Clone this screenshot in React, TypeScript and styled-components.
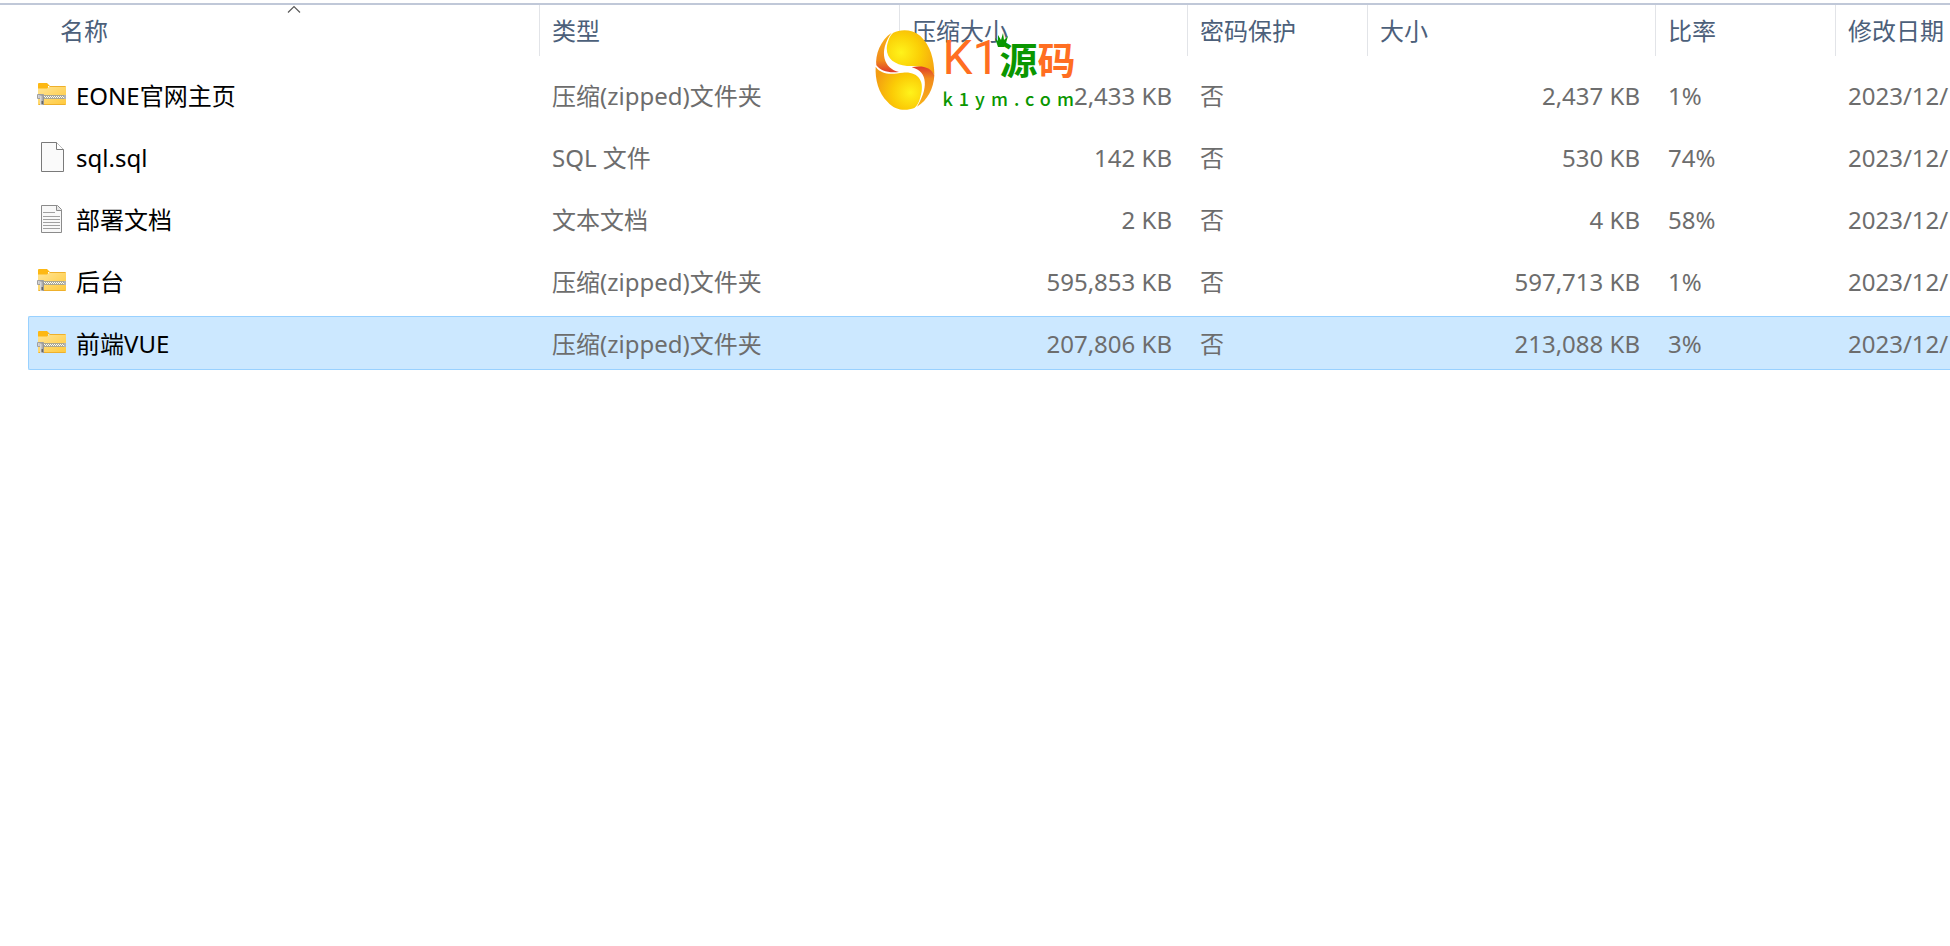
import React from "react";
import styled, { createGlobalStyle } from "styled-components";

const GlobalStyle = createGlobalStyle`
  * { box-sizing: border-box; }
  html, body { margin: 0; background: #fff; }
  body {
    font-family: "Noto Sans", "Noto Sans CJK SC", sans-serif;
    font-size: 24px;
    line-height: 32px;
    overflow-x: hidden;
  }
`;

const COLUMNS = "512px 360px 288px 180px 288px 180px minmax(0, 1fr)";

const Pane = styled.main`
  position: relative;
  min-height: 100vh;
  padding-top: 3px;
  overflow: hidden;
`;

const Table = styled.table`
  display: block;
  border-top: 2px solid #c0c8d8;
  padding-left: 28px;
`;

const Head = styled.thead`
  display: block;
  margin-bottom: 12px;
`;

const Body = styled.tbody`
  display: flex;
  flex-direction: column;
  gap: 8px;
`;

const HeadRow = styled.tr`
  display: grid;
  grid-template-columns: ${COLUMNS};
`;

const HeadCell = styled.th<{ $inset?: boolean }>`
  position: relative;
  display: flex;
  height: 51px;
  margin-left: ${(p) => (p.$inset ? "20px" : "0")};
  padding: 0;
  border-right: 1px solid #e2e4e8;
  &:last-child { border-right: 0; }
`;

const SortButton = styled.button`
  flex: 1;
  min-width: 0;
  padding: 1px 0 0 12px;
  border: 0;
  background: none;
  color: #4c607a;
  font: inherit;
  font-weight: 400;
  text-align: left;
  white-space: nowrap;
`;

const SortMark = styled.svg`
  position: absolute;
  top: 0;
  left: 50%;
  margin-left: -7px;
`;

const Row = styled.tr<{ $selected?: boolean }>`
  display: grid;
  grid-template-columns: ${COLUMNS};
  align-items: center;
  height: 54px;
  border: 1px solid ${(p) => (p.$selected ? "#99d1ff" : "transparent")};
  border-right: 0;
  border-radius: 2px 0 0 2px;
  background: ${(p) => (p.$selected ? "#cce8ff" : "transparent")};
`;

const Cell = styled.td<{ $right?: boolean }>`
  padding: 2px 17px 0 11px;
  color: #6d6d6d;
  text-align: ${(p) => (p.$right ? "right" : "left")};
  white-space: nowrap;
`;

const NameCell = styled(Cell)`
  display: flex;
  align-items: center;
  gap: 8px;
  padding: 0 0 0 7px;
  color: #000;
`;

const FileName = styled.span`
  padding-top: 2px;
`;

const Watermark = styled.div`
  position: absolute;
  top: 30px;
  left: 0;
  right: 0;
  display: flex;
  justify-content: center;
  gap: 8px;
  pointer-events: none;
`;

const Brand = styled.div`
  display: flex;
  flex-direction: column;
  width: 133px;
`;

const BrandName = styled.div`
  position: relative;
  display: flex;
  align-items: center;
  height: 56px;
  color: #ff6e21;
  white-space: nowrap;
`;

const BrandLatin = styled.span`
  font-family: Roboto, sans-serif;
  font-size: 48px;
  line-height: 56px;
`;

const BrandHan = styled.span<{ $green?: boolean }>`
  font-family: "Noto Sans CJK SC", sans-serif;
  font-size: 38px;
  font-weight: 700;
  line-height: 56px;
  color: ${(p) => (p.$green ? "#0a9600" : "#ff6e21")};
`;

const Crown = styled.svg`
  position: absolute;
  top: 3px;
  left: 51px;
`;

const BrandSite = styled.div`
  height: 24px;
  color: #0a9600;
  font-family: "Noto Sans CJK SC", sans-serif;
  font-size: 18px;
  font-weight: 500;
  line-height: 24px;
  letter-spacing: 6px;
  white-space: nowrap;
`;

const ZipIcon = () => (
  <svg width="32" height="32" viewBox="0 0 32 32" aria-hidden="true">
    <defs>
      <linearGradient id="folder" x1="0" y1="0" x2="1" y2="1">
        <stop offset="0" stopColor="#ffe596" />
        <stop offset="1" stopColor="#ffc93c" />
      </linearGradient>
      <linearGradient id="pull" x1="0" y1="0" x2="1" y2="0">
        <stop offset="0" stopColor="#e2e2e2" />
        <stop offset="1" stopColor="#8c8c8c" />
      </linearGradient>
    </defs>
    <path d="M2 5a1 1 0 0 1 1-1h8l3 3h-2v4H2z" fill="#fdb813" />
    <path d="M2 9.500h9l3-2.500h15a1 1 0 0 1 1 1v17a1 1 0 0 1-1 1H3a1 1 0 0 1-1-1z" fill="url(#folder)" />
    <path d="M13.500 7.500H29.500M2.500 25.500h27" stroke="#eeb02c" />
    <path d="M7 16h23v4H7z" fill="#aaa793" />
    <path d="M8 17.500h20M9 18.500h20" stroke="#fbfbf4" strokeDasharray="1 1" />
    <path d="M28 16h2v4h-2z" fill="#b4b4b4" />
    <path d="M1.500 15.500h6v4h-6z" fill="url(#pull)" stroke="#a0a0a0" />
    <path d="M4 17h4v9H4z" fill="url(#pull)" />
    <path d="M5.500 22h1.500v3H5.500z" fill="#666" />
  </svg>
);

const FileIcon = () => (
  <svg width="32" height="32" viewBox="0 0 32 32" aria-hidden="true">
    <path d="M5.500 1.500h15l7 7v22h-22z" fill="#fafafa" stroke="#7a7a7a" />
    <path d="M20.500 1.500v7h7" fill="#fff" stroke="#7a7a7a" />
  </svg>
);

const TextIcon = () => (
  <svg width="32" height="32" viewBox="0 0 32 32" aria-hidden="true">
    <path d="M5.500 2.500h16l4 4v23h-20z" fill="#f8f8f8" stroke="#8b8b8b" />
    <path d="M20.500 2.500v5h5" fill="#e4e4e4" stroke="#8b8b8b" />
    <path
      d="M7 9.500h12M7 13.500h17M7 16.500h17M7 19.500h17M7 22.500h17M7 25.500h17"
      stroke="#a0a0a0"
    />
  </svg>
);

const LogoMark = () => (
  <svg width="60" height="82" viewBox="0 0 180 246" aria-hidden="true">
    <defs>
      <radialGradient id="top" cx="0.3" cy="0.5" r="0.8">
        <stop offset="0" stopColor="#fff31a" />
        <stop offset="0.5" stopColor="#fbcf06" />
        <stop offset="1" stopColor="#f5a012" />
      </radialGradient>
      <radialGradient id="bottom" cx="0.75" cy="0.6" r="0.8">
        <stop offset="0" stopColor="#fff31a" />
        <stop offset="0.5" stopColor="#fbcb06" />
        <stop offset="1" stopColor="#f39c12" />
      </radialGradient>
      <linearGradient id="left" x1="0" y1="0" x2="0" y2="1">
        <stop offset="0" stopColor="#f9b418" />
        <stop offset="0.7" stopColor="#f18a1c" />
        <stop offset="1" stopColor="#de3a2c" />
      </linearGradient>
      <linearGradient id="right" x1="0" y1="0" x2="0" y2="1">
        <stop offset="0" stopColor="#de3a2c" />
        <stop offset="0.3" stopColor="#f18a1c" />
        <stop offset="1" stopColor="#f9b418" />
      </linearGradient>
    </defs>
    <path d="M55 8C76 -2 110 -4 136 18C166 46 178 88 178 134C160 110 130 108 96 108C50 104 24 76 40 32C44 20 48 14 55 8Z" fill="url(#top)" />
    <path d="M50 8C16 30 0 76 4 106C16 122 40 130 72 126C28 116 8 66 50 8Z" fill="url(#left)" />
    <path d="M2 110C20 136 50 132 84 128C128 124 152 152 136 202C132 218 126 228 118 234C92 244 60 242 38 216C10 188 0 148 2 110Z" fill="url(#bottom)" />
    <path d="M110 112C142 106 168 112 178 136C176 174 158 212 126 230C158 180 162 124 110 112Z" fill="url(#right)" />
  </svg>
);

const ICONS = { zip: ZipIcon, file: FileIcon, text: TextIcon };

const HEADINGS = ["名称", "类型", "压缩大小", "密码保护", "大小", "比率", "修改日期"];

type Entry = {
  icon: keyof typeof ICONS;
  name: string;
  type: string;
  packed: string;
  size: string;
  ratio: string;
  selected?: boolean;
};

const ENTRIES: Entry[] = [
  { icon: "zip", name: "EONE官网主页", type: "压缩(zipped)文件夹", packed: "2,433 KB", size: "2,437 KB", ratio: "1%" },
  { icon: "file", name: "sql.sql", type: "SQL 文件", packed: "142 KB", size: "530 KB", ratio: "74%" },
  { icon: "text", name: "部署文档", type: "文本文档", packed: "2 KB", size: "4 KB", ratio: "58%" },
  { icon: "zip", name: "后台", type: "压缩(zipped)文件夹", packed: "595,853 KB", size: "597,713 KB", ratio: "1%" },
  { icon: "zip", name: "前端VUE", type: "压缩(zipped)文件夹", packed: "207,806 KB", size: "213,088 KB", ratio: "3%", selected: true },
];

export default function App() {
  return (
    <Pane>
      <GlobalStyle />
      <Table>
        <Head>
          <HeadRow>
            {HEADINGS.map((label, i) => (
              <HeadCell key={label} $inset={i === 0} scope="col">
                <SortButton type="button">{label}</SortButton>
                {i === 0 && (
                  <SortMark width="14" height="9" viewBox="0 0 14 9" aria-hidden="true">
                    <path d="M1 7.500L7 1.500L13 7.500" fill="none" stroke="#5a5a5a" strokeWidth="1.2" />
                  </SortMark>
                )}
              </HeadCell>
            ))}
          </HeadRow>
        </Head>
        <Body>
          {ENTRIES.map((e) => {
            const Icon = ICONS[e.icon];
            return (
              <Row key={e.name} $selected={e.selected}>
                <NameCell>
                  <Icon />
                  <FileName>{e.name}</FileName>
                </NameCell>
                <Cell>{e.type}</Cell>
                <Cell $right>{e.packed}</Cell>
                <Cell>否</Cell>
                <Cell $right>{e.size}</Cell>
                <Cell>{e.ratio}</Cell>
                <Cell>2023/12/</Cell>
              </Row>
            );
          })}
        </Body>
      </Table>
      <Watermark>
        <LogoMark />
        <Brand>
          <BrandName>
            <BrandLatin>K1</BrandLatin>
            <BrandHan $green>源</BrandHan>
            <BrandHan>码</BrandHan>
            <Crown width="14" height="14" viewBox="0 0 14 14" aria-hidden="true">
              <path d="M1 5l3 3 0-6 3 5 2-7 1 7 4-4-2 7-2 4H4z" fill="#0a9600" />
            </Crown>
          </BrandName>
          <BrandSite>k1ym.com</BrandSite>
        </Brand>
      </Watermark>
    </Pane>
  );
}
